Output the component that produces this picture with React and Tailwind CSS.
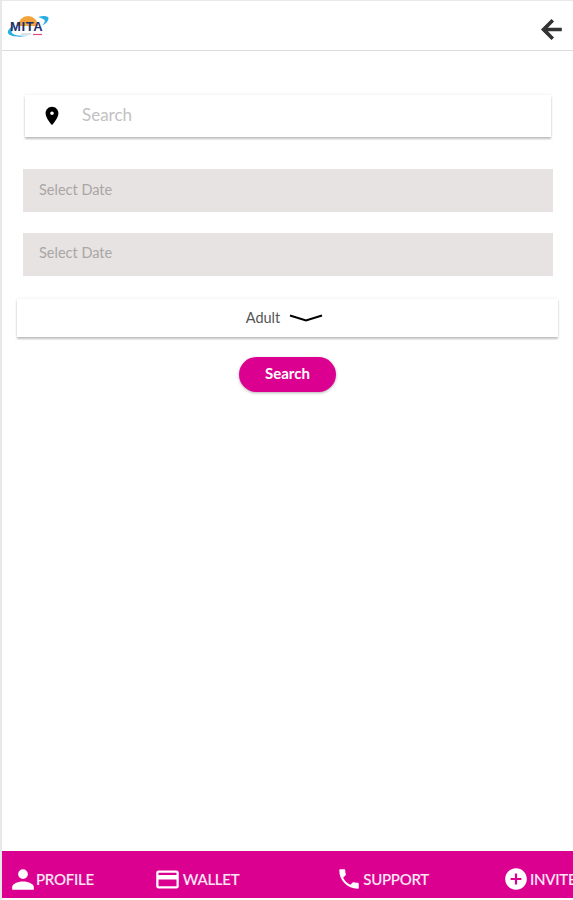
import React from "react";

const Logo = () => (
  <div className="relative w-[42px] h-[24px]">
    <svg viewBox="0 0 42 24" className="absolute inset-0 w-full h-full">
      <path d="M11 12a10 10 0 0 1 20 0z" fill="#f2a33c" />
      <path d="M31 3c5-1.500 11-1.500 10.500 2 -.5 2.500-3 5-6.500 6.500 2-2 3.500-4 2.500-5.500-1-1.200-3.500-1.800-6.500-3z" fill="#29aee0" />
      <path d="M8 11c-4 2-8 5-7 8 1.500 4 13 4.500 21 2.500-6 .5-15 .5-17-2.500-1-2 1-5.500 3-8z" fill="#29aee0" />
      <path d="M26 20.500h9" stroke="#e2497f" strokeWidth="1.200" />
      <path d="M14 20h10" stroke="#b9c4d6" strokeWidth="1" />
    </svg>
    <span className="absolute left-[3px] top-[6px] text-[13px] leading-[13px] font-bold text-[#1d2f6f] font-['Liberation_Sans',sans-serif] tracking-[0.6px]">
      MITA
    </span>
  </div>
);

const NavItem = ({ icon, label, className }) => (
  <div className={`flex items-center shrink-0 ${className}`}>
    {icon}
    <span className="text-[15px] font-semibold text-white/90 tracking-[-0.3px]">{label}</span>
  </div>
);

const App = () => {
  return (
    <div className="w-[573px] h-[900px] overflow-hidden bg-white border-l-2 border-t border-[#e8e8e8] flex flex-col font-['Lato',sans-serif]">
      {/* Header */}
      <header className="h-[50px] shrink-0 border-b border-[#dcdcdc] flex items-center justify-between pl-[5px] pr-[7px]">
        <Logo />
        <svg viewBox="0 0 24 24" className="w-[29px] h-[29px] mt-[8px] text-[#333]" fill="currentColor" stroke="currentColor" strokeWidth="1">
          <path d="M20 11H7.830l5.590-5.590L12 4l-8 8 8 8 1.410-1.410L7.830 13H20v-2z" />
        </svg>
      </header>

      {/* Form */}
      <main className="flex-1 flex flex-col">
        <div className="mt-[44px] ml-[23px] w-[526px] h-[42px] flex items-center bg-white shadow-[0_2px_2px_rgba(0,0,0,0.25),0_-1px_3px_rgba(0,0,0,0.05)]">
          <svg viewBox="0 0 24 24" className="w-[22px] h-[22px] ml-[16px] text-black" fill="currentColor">
            <path d="M12 2C8.130 2 5 5.130 5 9c0 5.250 7 13 7 13s7-7.750 7-13c0-3.870-3.130-7-7-7zm0 9a2 2 0 1 1 0-4 2 2 0 0 1 0 4z" />
          </svg>
          <span className="ml-[19px] pb-[3px] text-[17px] text-[#c2c2c2]">Search</span>
        </div>

        <div className="mt-[32px] ml-[21px] w-[530px] h-[43px] bg-[#e7e3e2] flex items-center pl-[16px] pb-[2px] text-[14.500px] text-[#a9a6a5]">
          Select Date
        </div>
        <div className="mt-[21px] ml-[21px] w-[530px] h-[43px] bg-[#e7e3e2] flex items-center pl-[16px] pb-[3px] text-[14.500px] text-[#a9a6a5]">
          Select Date
        </div>

        <div className="mt-[23px] ml-[15px] w-[541px] h-[38px] bg-white shadow-[0_2px_2px_rgba(0,0,0,0.25),0_-1px_3px_rgba(0,0,0,0.05)] flex items-center justify-center gap-[9px] pr-[6px]">
          <span className="text-[14.500px] text-[#555]">Adult</span>
          <svg viewBox="0 0 34 12" className="w-[34px] h-[12px]" fill="none">
            <path d="M1 3.500 17 8.500 33 3.500" stroke="#000" strokeWidth="2" />
          </svg>
        </div>

        <button className="mt-[20px] ml-[237px] w-[97px] h-[35px] rounded-full bg-[#dc0091] pb-[2px] text-white text-[15px] font-bold shadow-[0_1px_3px_rgba(0,0,0,0.3)]">
          Search
        </button>
      </main>

      {/* Bottom nav */}
      <nav className="h-[47px] mb-[2px] pt-[9px] shrink-0 bg-[#dc0091] flex items-center overflow-hidden whitespace-nowrap">
        <NavItem
          className="ml-[8px] gap-[0px]"
          label="PROFILE"
          icon={
            <svg viewBox="0 0 24 24" className="w-[26px] h-[26px] text-white" fill="currentColor">
              <path d="M12 12a4.500 4.500 0 1 0 0-9 4.500 4.500 0 0 0 0 9zm0 2.200c-3.300 0-10 1.700-10 5V22h20v-2.800c0-3.300-6.700-5-10-5z" />
            </svg>
          }
        />
        <NavItem
          className="ml-[60px] gap-[2px]"
          label="WALLET"
          icon={
            <svg viewBox="0 0 24 24" className="w-[27px] h-[27px] text-white" fill="currentColor">
              <path d="M20 4H4c-1.110 0-2 .890-2 2v12c0 1.110.890 2 2 2h16c1.110 0 2-.890 2-2V6c0-1.110-.890-2-2-2zm0 14H4v-6h16v6zm0-10H4V6h16v2z" />
            </svg>
          }
        />
        <NavItem
          className="ml-[97px] gap-[1px]"
          label="SUPPORT"
          icon={
            <svg viewBox="0 0 24 24" className="w-[26px] h-[26px] text-white" fill="currentColor">
              <path d="M6.620 10.790c1.440 2.830 3.760 5.140 6.590 6.590l2.200-2.200c.270-.270.670-.360 1.020-.240 1.120.370 2.330.570 3.570.570.550 0 1 .450 1 1V20c0 .550-.450 1-1 1-9.390 0-17-7.610-17-17 0-.550.450-1 1-1h3.500c.550 0 1 .450 1 1 0 1.250.200 2.450.570 3.570.110.350.030.740-.250 1.020l-2.200 2.200z" />
            </svg>
          }
        />
        <NavItem
          className="ml-[74px] gap-[1px]"
          label="INVITE"
          icon={
            <svg viewBox="0 0 24 24" className="w-[26px] h-[26px] text-white" fill="currentColor">
              <path d="M12 2C6.480 2 2 6.480 2 12s4.480 10 10 10 10-4.480 10-10S17.520 2 12 2zm5 11h-4v4h-2v-4H7v-2h4V7h2v4h4v2z" />
            </svg>
          }
        />
      </nav>
    </div>
  );
};

export default App;
